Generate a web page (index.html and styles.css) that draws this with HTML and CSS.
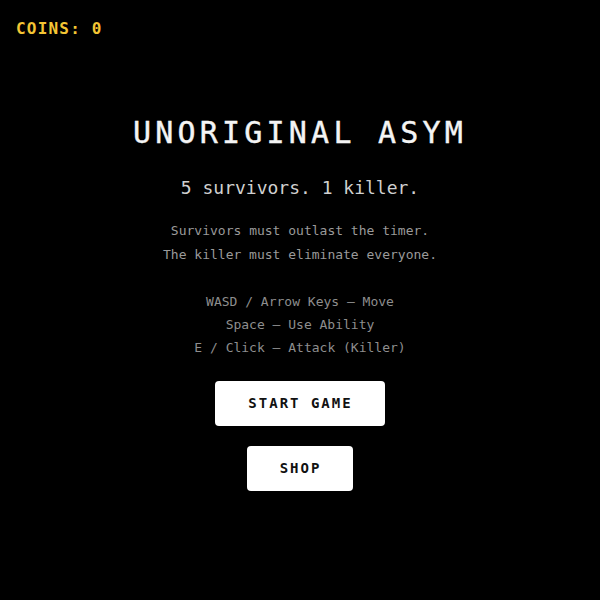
FILE: index.html
```html
<!DOCTYPE html>
<html>
<head>
<meta charset="utf-8">
<link rel="stylesheet" href="styles.css">
</head>
<body>
<div class="coins">COINS: 0</div>
<main class="menu">
  <h1 class="title">UNORIGINAL ASYM</h1>
  <p class="tagline">5 survivors. 1 killer.</p>
  <div class="desc">
    <p>Survivors must outlast the timer.</p>
    <p>The killer must eliminate everyone.</p>
  </div>
  <div class="controls">
    <p>WASD / Arrow Keys — Move</p>
    <p>Space — Use Ability</p>
    <p>E / Click — Attack (Killer)</p>
  </div>
  <div class="buttons">
    <button class="btn">START GAME</button>
    <button class="btn">SHOP</button>
  </div>
</main>
</body>
</html>
```
FILE: styles.css
```css
html, body {
  margin: 0;
  padding: 0;
  background: #000;
  height: 100%;
}
body {
  font-family: "DejaVu Sans Mono", "Liberation Mono", monospace;
  color: #fff;
  position: relative;
}
p { margin: 0; }
.coins {
  position: absolute;
  top: 19px;
  left: 16px;
  font-size: 16px;
  line-height: 20px;
  font-weight: bold;
  letter-spacing: 1.2px;
  color: #f4c534;
}
.menu {
  display: flex;
  flex-direction: column;
  align-items: center;
  padding-top: 115px;
  text-align: center;
}
.title {
  margin: 0;
  font-size: 30px;
  line-height: 36px;
  font-weight: normal;
  letter-spacing: 4.2px;
  color: #f4f4f4;
  -webkit-text-stroke: 0.4px #f4f4f4;
}
.tagline {
  margin-top: 25px;
  font-size: 18px;
  line-height: 24px;
  color: #d0d0d0;
}
.desc {
  margin-top: 19px;
  font-size: 13px;
  line-height: 24px;
  color: #9a9a9a;
}
.controls {
  margin-top: 23px;
  font-size: 13px;
  line-height: 23px;
  color: #8e8e8e;
}
.buttons {
  margin-top: 22px;
  display: flex;
  flex-direction: column;
  align-items: center;
  gap: 20px;
}
.btn {
  font-family: "DejaVu Sans Mono", "Liberation Mono", monospace;
  font-size: 14px;
  font-weight: bold;
  letter-spacing: 2px;
  line-height: 17px;
  height: 45px;
  padding: 0 32px 0 33px;
  background: #fff;
  color: #111;
  border: none;
  border-radius: 4px;
}
```
